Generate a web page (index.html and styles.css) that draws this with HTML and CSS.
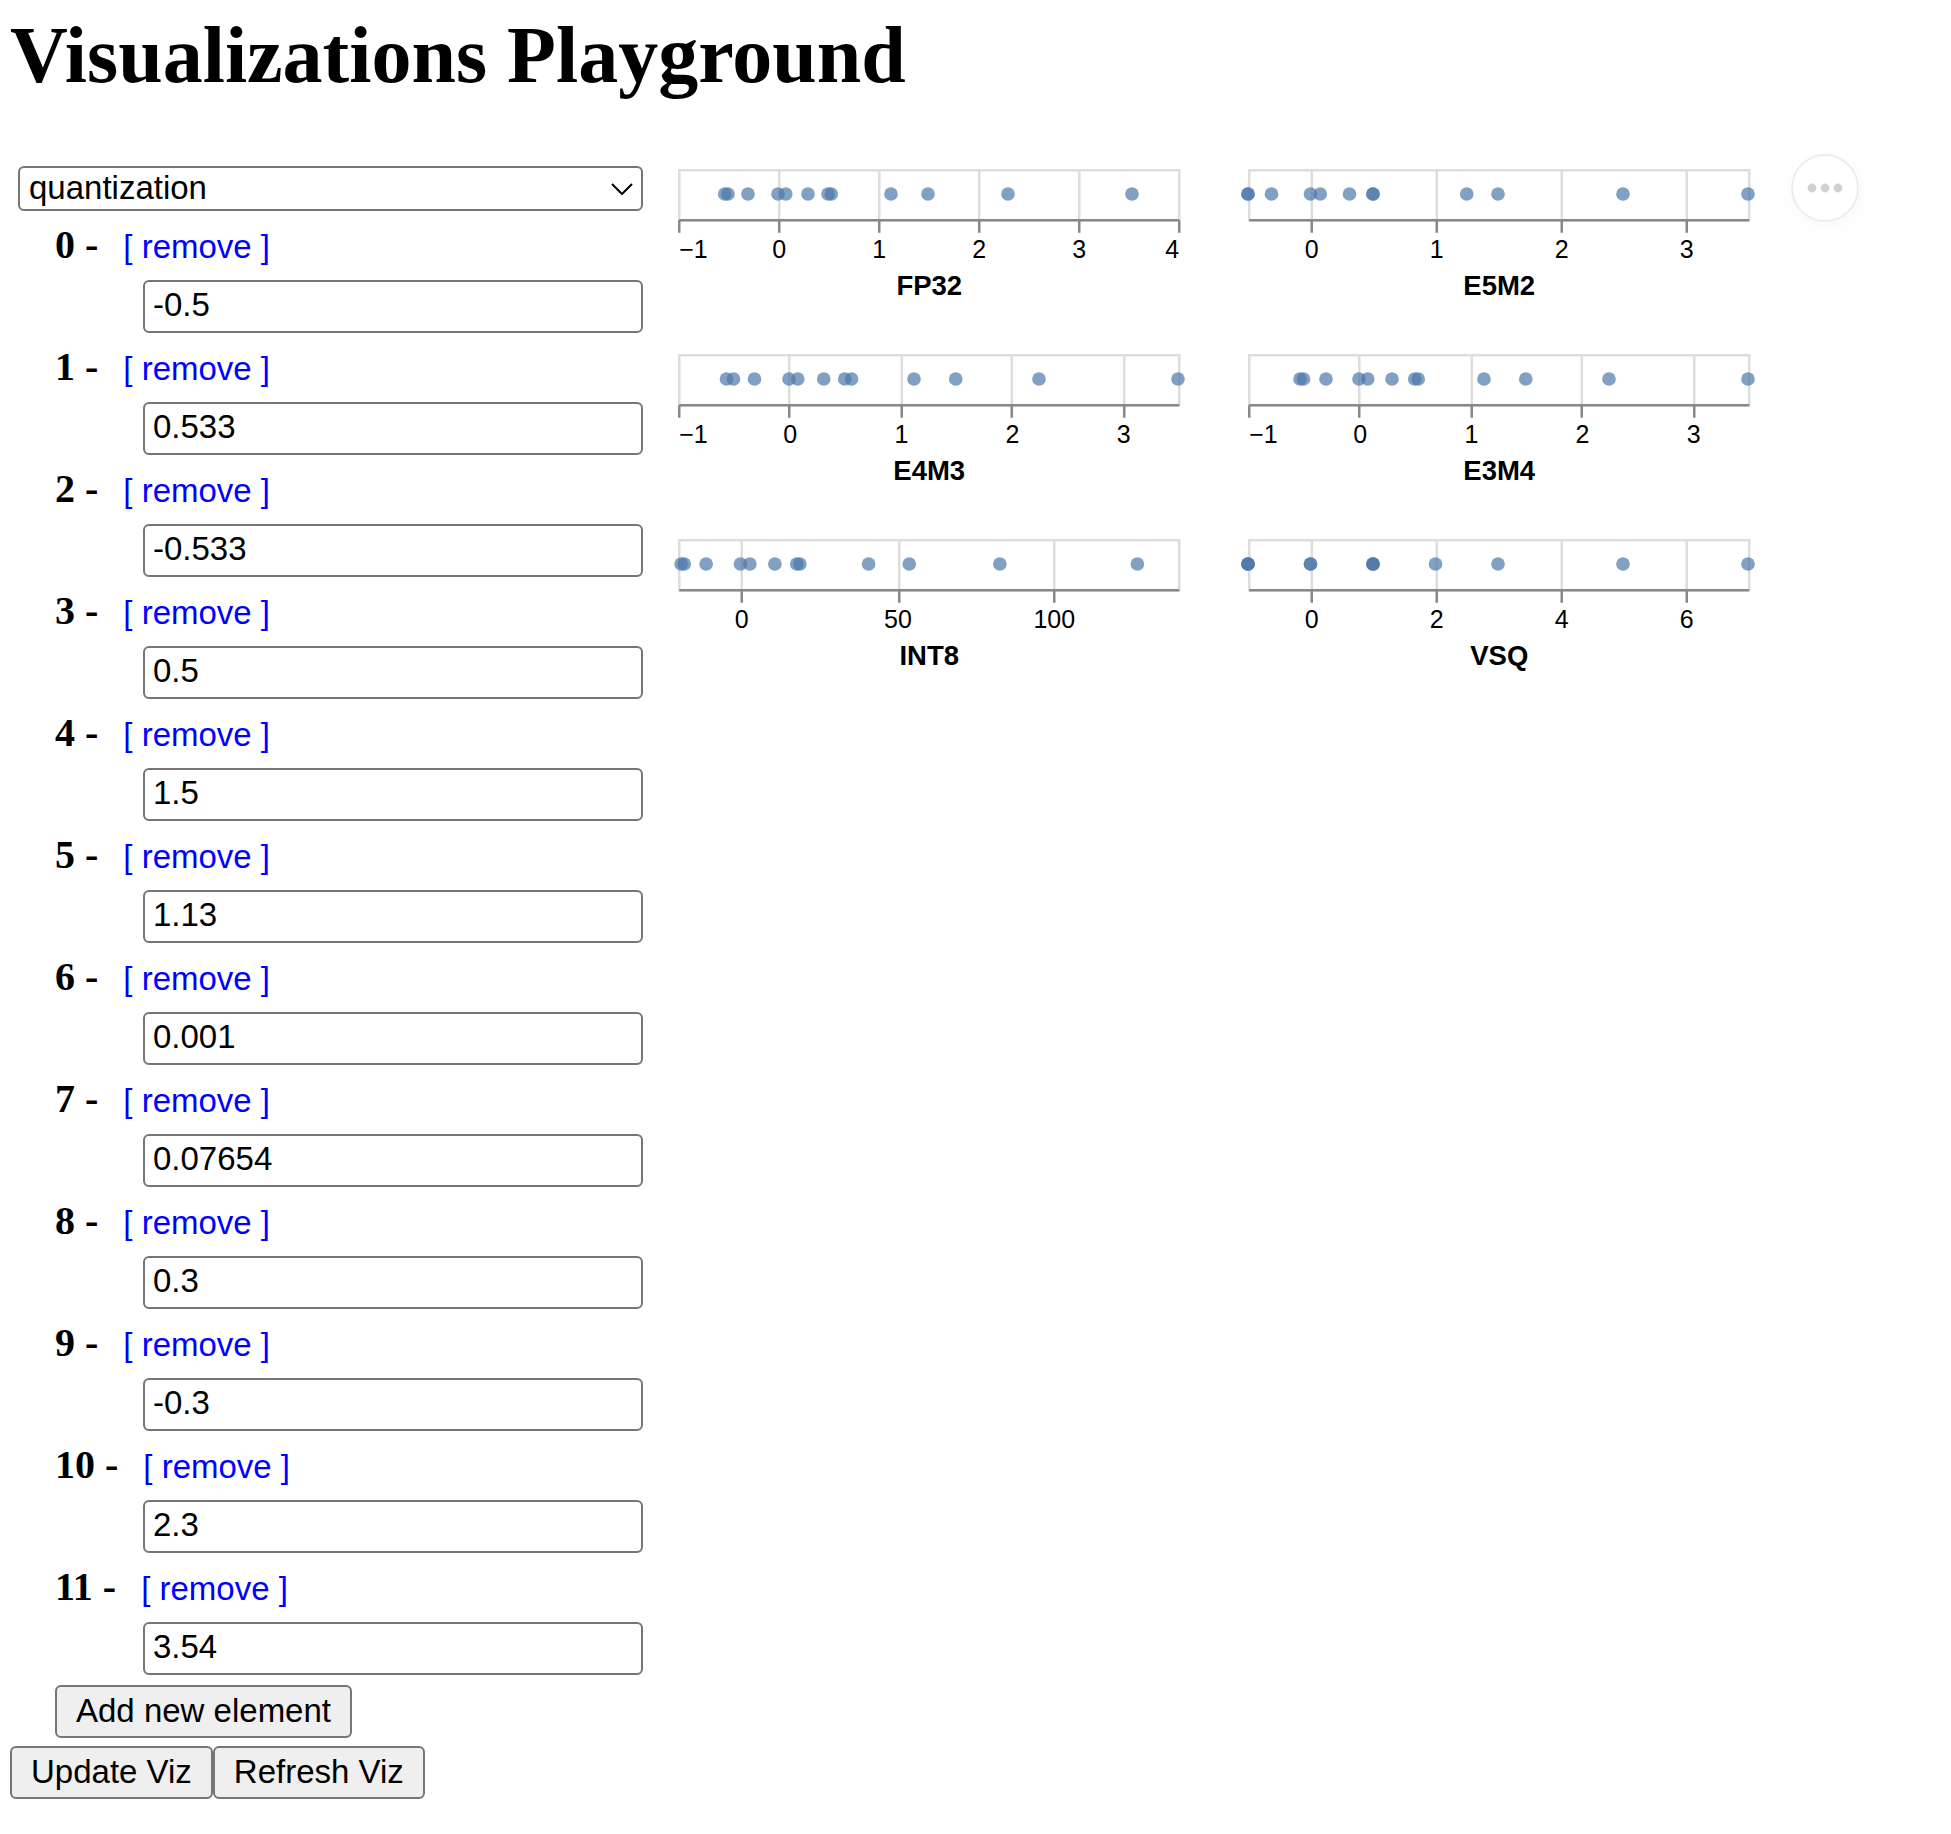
FILE: index.html
```html
<!DOCTYPE html>
<html lang="en">
<head>
<meta charset="utf-8">
<meta name="viewport" content="width=device-width, initial-scale=1">
<title>Visualizations Playground</title>
<link rel="stylesheet" href="styles.css">
</head>
<body>
<h1 class="title">Visualizations Playground</h1>
<main class="playground">
  <form class="editor">
    <div class="picker">
      <select class="picker-select" aria-label="Visualization"><option>quantization</option></select>
      <svg class="picker-arrow" viewBox="0 0 22 12" aria-hidden="true"><path d="M1 1L11 11L21 1"/></svg>
    </div>
    <ul class="elements">
      <li><div class="element-head"><label class="element-label" for="e0">0 -</label><button type="button" class="remove">[ remove ]</button></div><input class="element-value" id="e0" value="-0.5"></li>
      <li><div class="element-head"><label class="element-label" for="e1">1 -</label><button type="button" class="remove">[ remove ]</button></div><input class="element-value" id="e1" value="0.533"></li>
      <li><div class="element-head"><label class="element-label" for="e2">2 -</label><button type="button" class="remove">[ remove ]</button></div><input class="element-value" id="e2" value="-0.533"></li>
      <li><div class="element-head"><label class="element-label" for="e3">3 -</label><button type="button" class="remove">[ remove ]</button></div><input class="element-value" id="e3" value="0.5"></li>
      <li><div class="element-head"><label class="element-label" for="e4">4 -</label><button type="button" class="remove">[ remove ]</button></div><input class="element-value" id="e4" value="1.5"></li>
      <li><div class="element-head"><label class="element-label" for="e5">5 -</label><button type="button" class="remove">[ remove ]</button></div><input class="element-value" id="e5" value="1.13"></li>
      <li><div class="element-head"><label class="element-label" for="e6">6 -</label><button type="button" class="remove">[ remove ]</button></div><input class="element-value" id="e6" value="0.001"></li>
      <li><div class="element-head"><label class="element-label" for="e7">7 -</label><button type="button" class="remove">[ remove ]</button></div><input class="element-value" id="e7" value="0.07654"></li>
      <li><div class="element-head"><label class="element-label" for="e8">8 -</label><button type="button" class="remove">[ remove ]</button></div><input class="element-value" id="e8" value="0.3"></li>
      <li><div class="element-head"><label class="element-label" for="e9">9 -</label><button type="button" class="remove">[ remove ]</button></div><input class="element-value" id="e9" value="-0.3"></li>
      <li><div class="element-head"><label class="element-label" for="e10">10 -</label><button type="button" class="remove">[ remove ]</button></div><input class="element-value" id="e10" value="2.3"></li>
      <li><div class="element-head"><label class="element-label" for="e11">11 -</label><button type="button" class="remove">[ remove ]</button></div><input class="element-value" id="e11" value="3.54"></li>
    </ul>
    <button type="button" class="button add">Add new element</button>
    <div class="actions">
      <button type="button" class="button">Update Viz</button>
      <button type="button" class="button">Refresh Viz</button>
    </div>
  </form>

  <section class="charts" aria-label="Charts">
    <svg class="chart" viewBox="0 0 200 52" role="img" aria-label="FP32">
      <path class="grid" d="M.5.5h200v20H.5zM40.5.5v20M80.5.5v20M120.5.5v20M160.5.5v20"/>
      <path class="axis" d="M.5 20.5h200M.5 20.5v5M40.5 20.5v5M80.5 20.5v5M120.5 20.5v5M160.5 20.5v5M200.5 20.5v5"/>
      <g class="dots"><circle cx="20" cy="10" r="2.74"/><circle cx="61.3" cy="10" r="2.74"/><circle cx="18.7" cy="10" r="2.74"/><circle cx="60" cy="10" r="2.74"/><circle cx="100" cy="10" r="2.74"/><circle cx="85.2" cy="10" r="2.74"/><circle cx="40" cy="10" r="2.74"/><circle cx="43.1" cy="10" r="2.74"/><circle cx="52" cy="10" r="2.74"/><circle cx="28" cy="10" r="2.74"/><circle cx="132" cy="10" r="2.74"/><circle cx="181.6" cy="10" r="2.74"/></g>
      <g class="ticks"><text class="first" x="0.5" y="35.5">−1</text><text x="40.5" y="35.5">0</text><text x="80.5" y="35.5">1</text><text x="120.5" y="35.5">2</text><text x="160.5" y="35.5">3</text><text class="last" x="200.5" y="35.5">4</text></g>
      <text class="name" x="100.5" y="50.5">FP32</text>
    </svg>
    <svg class="chart" viewBox="0 0 200 52" role="img" aria-label="E5M2">
      <path class="grid" d="M.5.5h200v20H.5zM25.5.5v20M75.5.5v20M125.5.5v20M175.5.5v20"/>
      <path class="axis" d="M.5 20.5h200M25.5 20.5v5M75.5 20.5v5M125.5 20.5v5M175.5 20.5v5"/>
      <g class="dots"><circle cx="0" cy="10" r="2.74"/><circle cx="50" cy="10" r="2.74"/><circle cx="0" cy="10" r="2.74"/><circle cx="50" cy="10" r="2.74"/><circle cx="100" cy="10" r="2.74"/><circle cx="87.5" cy="10" r="2.74"/><circle cx="25" cy="10" r="2.74"/><circle cx="28.9" cy="10" r="2.74"/><circle cx="40.6" cy="10" r="2.74"/><circle cx="9.4" cy="10" r="2.74"/><circle cx="150" cy="10" r="2.74"/><circle cx="200" cy="10" r="2.74"/></g>
      <g class="ticks"><text x="25.5" y="35.5">0</text><text x="75.5" y="35.5">1</text><text x="125.5" y="35.5">2</text><text x="175.5" y="35.5">3</text></g>
      <text class="name" x="100.5" y="50.5">E5M2</text>
    </svg>
    <svg class="chart" viewBox="0 0 200 52" role="img" aria-label="E4M3">
      <path class="grid" d="M.5.5h200v20H.5zM44.5.5v20M89.5.5v20M133.5.5v20M178.5.5v20"/>
      <path class="axis" d="M.5 20.5h200M.5 20.5v5M44.5 20.5v5M89.5 20.5v5M133.5 20.5v5M178.5 20.5v5"/>
      <g class="dots"><circle cx="22.2" cy="10" r="2.74"/><circle cx="69.4" cy="10" r="2.74"/><circle cx="19.4" cy="10" r="2.74"/><circle cx="66.7" cy="10" r="2.74"/><circle cx="111.1" cy="10" r="2.74"/><circle cx="94.4" cy="10" r="2.74"/><circle cx="44.4" cy="10" r="2.74"/><circle cx="47.9" cy="10" r="2.74"/><circle cx="58.3" cy="10" r="2.74"/><circle cx="30.6" cy="10" r="2.74"/><circle cx="144.4" cy="10" r="2.74"/><circle cx="200" cy="10" r="2.74"/></g>
      <g class="ticks"><text class="first" x="0.5" y="35.5">−1</text><text x="44.9" y="35.5">0</text><text x="89.4" y="35.5">1</text><text x="133.8" y="35.5">2</text><text x="178.3" y="35.5">3</text></g>
      <text class="name" x="100.5" y="50.5">E4M3</text>
    </svg>
    <svg class="chart" viewBox="0 0 200 52" role="img" aria-label="E3M4">
      <path class="grid" d="M.5.5h200v20H.5zM44.5.5v20M89.5.5v20M133.5.5v20M178.5.5v20"/>
      <path class="axis" d="M.5 20.5h200M.5 20.5v5M44.5 20.5v5M89.5 20.5v5M133.5 20.5v5M178.5 20.5v5"/>
      <g class="dots"><circle cx="22.2" cy="10" r="2.74"/><circle cx="68.1" cy="10" r="2.74"/><circle cx="20.8" cy="10" r="2.74"/><circle cx="66.7" cy="10" r="2.74"/><circle cx="111.1" cy="10" r="2.74"/><circle cx="94.4" cy="10" r="2.74"/><circle cx="44.4" cy="10" r="2.74"/><circle cx="47.9" cy="10" r="2.74"/><circle cx="57.6" cy="10" r="2.74"/><circle cx="31.2" cy="10" r="2.74"/><circle cx="144.4" cy="10" r="2.74"/><circle cx="200" cy="10" r="2.74"/></g>
      <g class="ticks"><text class="first" x="0.5" y="35.5">−1</text><text x="44.9" y="35.5">0</text><text x="89.4" y="35.5">1</text><text x="133.8" y="35.5">2</text><text x="178.3" y="35.5">3</text></g>
      <text class="name" x="100.5" y="50.5">E3M4</text>
    </svg>
    <svg class="chart" viewBox="0 0 200 52" role="img" aria-label="INT8">
      <path class="grid" d="M.5.5h200v20H.5zM25.5.5v20M88.5.5v20M150.5.5v20"/>
      <path class="axis" d="M.5 20.5h200M25.5 20.5v5M88.5 20.5v5M150.5 20.5v5"/>
      <g class="dots"><circle cx="2.5" cy="10" r="2.74"/><circle cx="48.75" cy="10" r="2.74"/><circle cx="1.25" cy="10" r="2.74"/><circle cx="47.5" cy="10" r="2.74"/><circle cx="92.5" cy="10" r="2.74"/><circle cx="76.25" cy="10" r="2.74"/><circle cx="25" cy="10" r="2.74"/><circle cx="28.75" cy="10" r="2.74"/><circle cx="38.75" cy="10" r="2.74"/><circle cx="11.25" cy="10" r="2.74"/><circle cx="128.75" cy="10" r="2.74"/><circle cx="183.75" cy="10" r="2.74"/></g>
      <g class="ticks"><text x="25.5" y="35.5">0</text><text x="88" y="35.5">50</text><text x="150.5" y="35.5">100</text></g>
      <text class="name" x="100.5" y="50.5">INT8</text>
    </svg>
    <svg class="chart" viewBox="0 0 200 52" role="img" aria-label="VSQ">
      <path class="grid" d="M.5.5h200v20H.5zM25.5.5v20M75.5.5v20M125.5.5v20M175.5.5v20"/>
      <path class="axis" d="M.5 20.5h200M25.5 20.5v5M75.5 20.5v5M125.5 20.5v5M175.5 20.5v5"/>
      <g class="dots"><circle cx="0" cy="10" r="2.74"/><circle cx="50" cy="10" r="2.74"/><circle cx="0" cy="10" r="2.74"/><circle cx="50" cy="10" r="2.74"/><circle cx="100" cy="10" r="2.74"/><circle cx="75" cy="10" r="2.74"/><circle cx="25" cy="10" r="2.74"/><circle cx="25" cy="10" r="2.74"/><circle cx="50" cy="10" r="2.74"/><circle cx="0" cy="10" r="2.74"/><circle cx="150" cy="10" r="2.74"/><circle cx="200" cy="10" r="2.74"/></g>
      <g class="ticks"><text x="25.5" y="35.5">0</text><text x="75.5" y="35.5">2</text><text x="125.5" y="35.5">4</text><text x="175.5" y="35.5">6</text></g>
      <text class="name" x="100.5" y="50.5">VSQ</text>
    </svg>
  </section>

  <button type="button" class="menu" aria-label="Chart options">
    <svg class="menu-icon" viewBox="0 0 36 10" aria-hidden="true"><circle cx="5" cy="5" r="4.4"/><circle cx="18" cy="5" r="4.4"/><circle cx="31" cy="5" r="4.4"/></svg>
  </button>
</main>
</body>
</html>
```
FILE: styles.css
```css
* {
  box-sizing: border-box;
}

body {
  margin: 10px;
  background: #fff;
  color: #000;
  font-family: "Liberation Serif", "Times New Roman", serif;
}

.title {
  margin: 0 0 54px;
  font-size: 80px;
  line-height: 90px;
}

.playground {
  display: flex;
  align-items: flex-start;
}

/* Editor column */
.editor {
  flex: 0 0 633px;
  padding-top: 12px;
}

.picker {
  display: grid;
  align-items: center;
  margin-left: 8px;
}

.picker-select,
.element-value,
.button,
.remove {
  font-family: "Liberation Sans", Arial, sans-serif;
  font-size: 33px;
  color: #000;
}

.picker-select {
  grid-area: 1 / 1;
  appearance: none;
  width: 100%;
  height: 45px;
  padding: 0 9px 2px;
  border: 2px solid #767676;
  border-radius: 6px;
  background: #fff;
}

.picker-arrow {
  grid-area: 1 / 1;
  justify-self: end;
  width: 22px;
  height: 12px;
  margin-right: 10px;
  fill: none;
  stroke: #000;
  stroke-width: 2;
  pointer-events: none;
}

.elements {
  margin: 0 0 0 45px;
  padding: 0;
  list-style: none;
}

.element-head {
  display: flex;
  align-items: baseline;
  height: 69px;
  padding-top: 11px;
}

.element-label {
  font-size: 40px;
  font-weight: bold;
  line-height: 46px;
}

.remove {
  margin-left: 25px;
  padding: 0;
  border: 0;
  background: none;
  color: #00f;
  line-height: 38px;
}

.element-value {
  display: block;
  width: calc(100% - 88px);
  height: 53px;
  margin-left: 88px;
  padding: 0 8px 4px;
  border: 2px solid #767676;
  border-radius: 6px;
  background: #fff;
}

.button {
  height: 53px;
  padding: 0 19px 2px;
  border: 2px solid #767676;
  border-radius: 6px;
  background: #efefef;
}

.add {
  display: block;
  margin: 10px 0 8px 45px;
}

.actions {
  display: flex;
}

/* Charts */
.charts {
  display: grid;
  grid-template-columns: 500px 500px;
  gap: 55px 70px;
  margin-left: 35px;
  padding-top: 15px;
}

.chart {
  display: block;
  width: 500px;
  height: 130px;
  overflow: visible;
  font-family: "Liberation Sans", Arial, sans-serif;
}

.grid,
.axis {
  fill: none;
  stroke: #ddd;
  stroke-width: 1;
}

.axis {
  stroke: #888;
}

.dots circle {
  fill: #4c78a8;
  opacity: 0.7;
}

.ticks {
  font-size: 10px;
  text-anchor: middle;
}

.ticks .first {
  text-anchor: start;
}

.ticks .last {
  text-anchor: end;
}

.name {
  font-size: 11px;
  font-weight: bold;
  text-anchor: middle;
}

.menu {
  display: grid;
  flex: none;
  place-items: center;
  width: 68px;
  height: 68px;
  margin-left: 43px;
  padding: 0;
  border: 2px solid #aaa;
  border-radius: 50%;
  background: #fff;
  box-shadow: 2px 5px 12px rgba(0, 0, 0, 0.1);
  opacity: 0.2;
}

.menu-icon {
  width: 36px;
  height: 10px;
  fill: #1b1e23;
}
```
